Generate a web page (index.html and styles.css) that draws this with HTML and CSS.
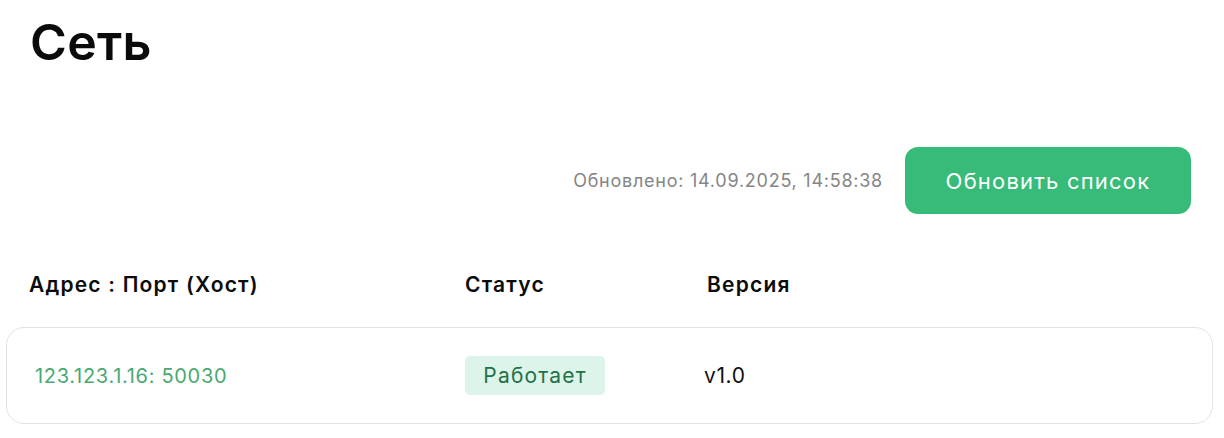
FILE: index.html
```html
<!DOCTYPE html>
<html lang="ru">
<head>
<meta charset="utf-8">
<title>Сеть</title>
<link rel="stylesheet" href="styles.css">
</head>
<body>
<main class="page">
  <h1 class="title">Сеть</h1>
  <div class="toolbar">
    <span class="updated">Обновлено: 14.09.2025, 14:58:38</span>
    <button class="refresh" type="button">Обновить список</button>
  </div>
  <div class="table">
    <div class="thead">
      <div class="th">Адрес : Порт (Хост)</div>
      <div class="th">Статус</div>
      <div class="th">Версия</div>
    </div>
    <div class="row">
      <div class="addr">123.123.1.16: 50030</div>
      <div class="status"><span class="badge">Работает</span></div>
      <div class="version">v1.0</div>
    </div>
  </div>
</main>
</body>
</html>
```
FILE: styles.css
```css
* { box-sizing: border-box; }
html, body { margin: 0; padding: 0; background: #fff; }
body {
  font-family: "Inter", "Noto Sans", sans-serif;
  color: #111;
}
.page {
  padding: 10px 11px 0 6px;
}
.title {
  margin: 0 0 0 24px;
  font-size: 50px;
  line-height: 64px;
  font-weight: 600;
  color: #0b0b0b;
  letter-spacing: 0.3px;
}
.toolbar {
  display: flex;
  justify-content: flex-end;
  align-items: center;
  gap: 22px;
  margin-top: 73px;
  padding-right: 22px;
}
.updated {
  font-size: 18px;
  letter-spacing: 0.75px;
  color: #858585;
  font-weight: 400;
}
.refresh {
  width: 286px;
  height: 67px;
  border: 0;
  border-radius: 13px;
  background: #36bb78;
  color: #fff;
  font-family: inherit;
  font-size: 22px;
  letter-spacing: 1.2px;
  font-weight: 400;
  cursor: pointer;
}
.table { margin-top: 52px; }
.thead {
  display: grid;
  grid-template-columns: 436px 242px 1fr;
  padding-left: 23px;
  height: 40px;
  align-items: center;
}
.th {
  font-size: 21px;
  letter-spacing: 1.2px;
  font-weight: 600;
  color: #0b0b0b;
  margin-top: -3px;
}
.row {
  display: grid;
  grid-template-columns: 429px 240px 1fr;
  align-items: center;
  margin-top: 21px;
  height: 97px;
  padding-left: 29px;
  border: 1px solid #e3e3e3;
  border-radius: 18px;
}
.addr {
  font-size: 20px;
  letter-spacing: 0.7px;
  color: #4aa872;
  margin-left: -1px;
}
.badge {
  display: inline-flex;
  align-items: center;
  justify-content: center;
  width: 140px;
  height: 39px;
  border-radius: 5px;
  background: #dcf4e9;
  color: #237148;
  font-size: 21px;
  letter-spacing: 1.2px;
}
.version {
  font-size: 21px;
  letter-spacing: 0.6px;
  color: #111;
  margin-left: -1px;
}
```
